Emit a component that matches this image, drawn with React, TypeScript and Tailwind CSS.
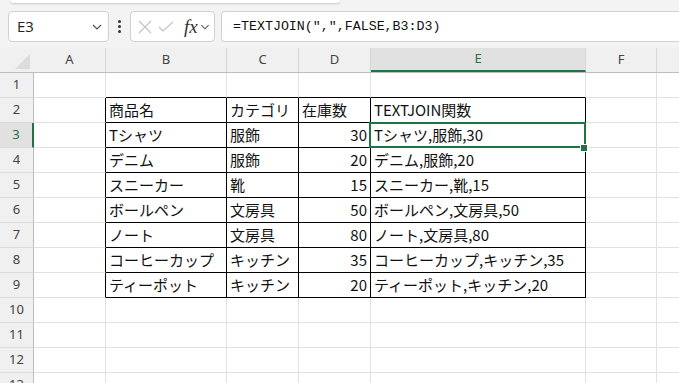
import React from "react";

/* column + row data */
const cols = [
  { key: "A", w: "w-[72px]" },
  { key: "B", w: "w-[121px]" },
  { key: "C", w: "w-[72px]" },
  { key: "D", w: "w-[72px]" },
  { key: "E", w: "w-[215px]" },
  { key: "F", w: "w-[71px]" },
  { key: "", w: "w-[60px]" },
];

const table: Record<number, string[]> = {
  2: ["商品名", "カテゴリ", "在庫数", "TEXTJOIN関数"],
  3: ["Tシャツ", "服飾", "30", "Tシャツ,服飾,30"],
  4: ["デニム", "服飾", "20", "デニム,服飾,20"],
  5: ["スニーカー", "靴", "15", "スニーカー,靴,15"],
  6: ["ボールペン", "文房具", "50", "ボールペン,文房具,50"],
  7: ["ノート", "文房具", "80", "ノート,文房具,80"],
  8: ["コーヒーカップ", "キッチン", "35", "コーヒーカップ,キッチン,35"],
  9: ["ティーポット", "キッチン", "20", "ティーポット,キッチン,20"],
};

const rows = Array.from({ length: 13 }, (_, i) => i + 1);

function Chevron() {
  return (
    <svg width="10" height="6" viewBox="0 0 10 6" className="shrink-0">
      <polyline points="1,1 5,5 9,1" fill="none" stroke="#555" strokeWidth="1.2" />
    </svg>
  );
}

function Toolbar() {
  return (
    <div className="h-[48px] bg-[#f3f3f3] flex flex-col">
      <div className="h-[3px] ml-[10px] w-[330px] bg-white rounded-b-[4px] shadow-[0_1px_2px_rgba(0,0,0,0.18)]" />
      <div className="flex h-[31px] mt-[8px] items-stretch">
        {/* name box */}
        <div className="ml-[8px] w-[101px] bg-white border border-[#d1d1d1] rounded-[4px] flex items-center justify-between pl-[8px] pr-[6px]">
          <span className="text-[15px] text-[#222] font-['Open_Sans',sans-serif]">E3</span>
          <Chevron />
        </div>
        {/* more dots */}
        <div className="w-[21px] flex flex-col items-center justify-center gap-[2px]">
          <span className="w-[3px] h-[3px] rounded-full bg-[#333]" />
          <span className="w-[3px] h-[3px] rounded-full bg-[#333]" />
          <span className="w-[3px] h-[3px] rounded-full bg-[#333]" />
        </div>
        {/* cancel / enter / fx */}
        <div className="w-[85px] bg-white border border-[#d1d1d1] rounded-[4px] flex items-center pl-[7px] pr-[3px]">
          <svg width="14" height="14" viewBox="0 0 14 14">
            <path d="M1 1 L13 13 M13 1 L1 13" stroke="#c4c4c4" strokeWidth="1.2" fill="none" />
          </svg>
          <svg width="16" height="12" viewBox="0 0 16 12" className="ml-[6px]">
            <polyline points="1,6 5,10 15,1" stroke="#c4c4c4" strokeWidth="1.2" fill="none" />
          </svg>
          <span className="ml-[10px] text-[19px] italic text-[#333] font-['Liberation_Serif',serif] leading-none">
            fx
          </span>
          <span className="ml-[2px] scale-90">
            <Chevron />
          </span>
        </div>
        {/* formula */}
        <div className="ml-[6px] flex-1 bg-white border border-r-0 border-[#d1d1d1] rounded-l-[4px] flex items-center pl-[11px]">
          <span className="text-[13.3px] text-[#111] font-['Liberation_Mono',monospace]">
            =TEXTJOIN(",",FALSE,B3:D3)
          </span>
        </div>
      </div>
    </div>
  );
}

function ColumnHeaders() {
  return (
    <div className="flex h-[25px] bg-[#f0f0f0] border-b border-[#bdbdbd]">
      <div className="w-[34px] shrink-0 relative">
        <svg width="16" height="16" viewBox="0 0 16 16" className="absolute left-[15px] top-[6px]">
          <polygon points="15,0 15,15 0,15" fill="#dcdcdc" />
        </svg>
      </div>
      {cols.map((c, i) => {
        const active = c.key === "E";
        return (
          <div
            key={i}
            className={`${c.w} shrink-0 flex items-center justify-center text-[13px] font-['Noto_Sans',sans-serif] border-r border-[#d6d6d6] ${
              active ? "bg-[#e1e1e1] text-[#217346] border-b-2 border-b-[#217346]" : "text-[#444]"
            }`}
          >
            {c.key}
          </div>
        );
      })}
    </div>
  );
}

function Cell({ row, ci }: { row: number; ci: number }) {
  const inRows = row >= 2 && row <= 9;
  const inCols = ci >= 1 && ci <= 4;
  const blackRight = inRows && ci >= 0 && ci <= 4;
  const blackBottom = inCols && row >= 1 && row <= 9;
  const data = inRows && inCols ? table[row][ci - 1] : "";
  const numeric = ci === 3 && row >= 3;
  return (
    <div
      className={`${cols[ci].w} shrink-0 h-[25px] border-r border-b flex items-center px-[3px] overflow-hidden whitespace-nowrap text-[15px] text-[#111] font-['Noto_Sans_CJK_JP',sans-serif] ${
        blackRight ? "border-r-black" : "border-r-[#e1e1e1]"
      } ${blackBottom ? "border-b-black" : "border-b-[#e1e1e1]"} ${numeric ? "justify-end" : ""}`}
    >
      {data}
    </div>
  );
}

function Grid() {
  return (
    <div className="relative">
      {rows.map((r) => {
        const active = r === 3;
        return (
          <div key={r} className="flex">
            <div
              className={`w-[34px] shrink-0 h-[25px] flex items-center justify-center text-[13px] font-['Noto_Sans',sans-serif] border-b border-[#dadada] border-r ${
                active
                  ? "bg-[#e1e1e1] text-[#217346] border-r-2 border-r-[#217346]"
                  : "bg-[#f0f0f0] text-[#444] border-r-[#bdbdbd]"
              }`}
            >
              {r}
            </div>
            {cols.map((_, ci) => (
              <Cell key={ci} row={r} ci={ci} />
            ))}
          </div>
        );
      })}
      {/* active cell E3 */}
      <div className="absolute left-[369px] top-[49px] w-[217px] h-[26px] border-2 border-[#217346] pointer-events-none" />
      <div className="absolute left-[581px] top-[72px] w-[6px] h-[6px] bg-[#217346] border border-white box-content -translate-x-[1px] -translate-y-[1px]" />
    </div>
  );
}

export default function App() {
  return (
    <div className="w-[679px] h-[383px] overflow-hidden bg-white">
      <Toolbar />
      <ColumnHeaders />
      <Grid />
    </div>
  );
}
